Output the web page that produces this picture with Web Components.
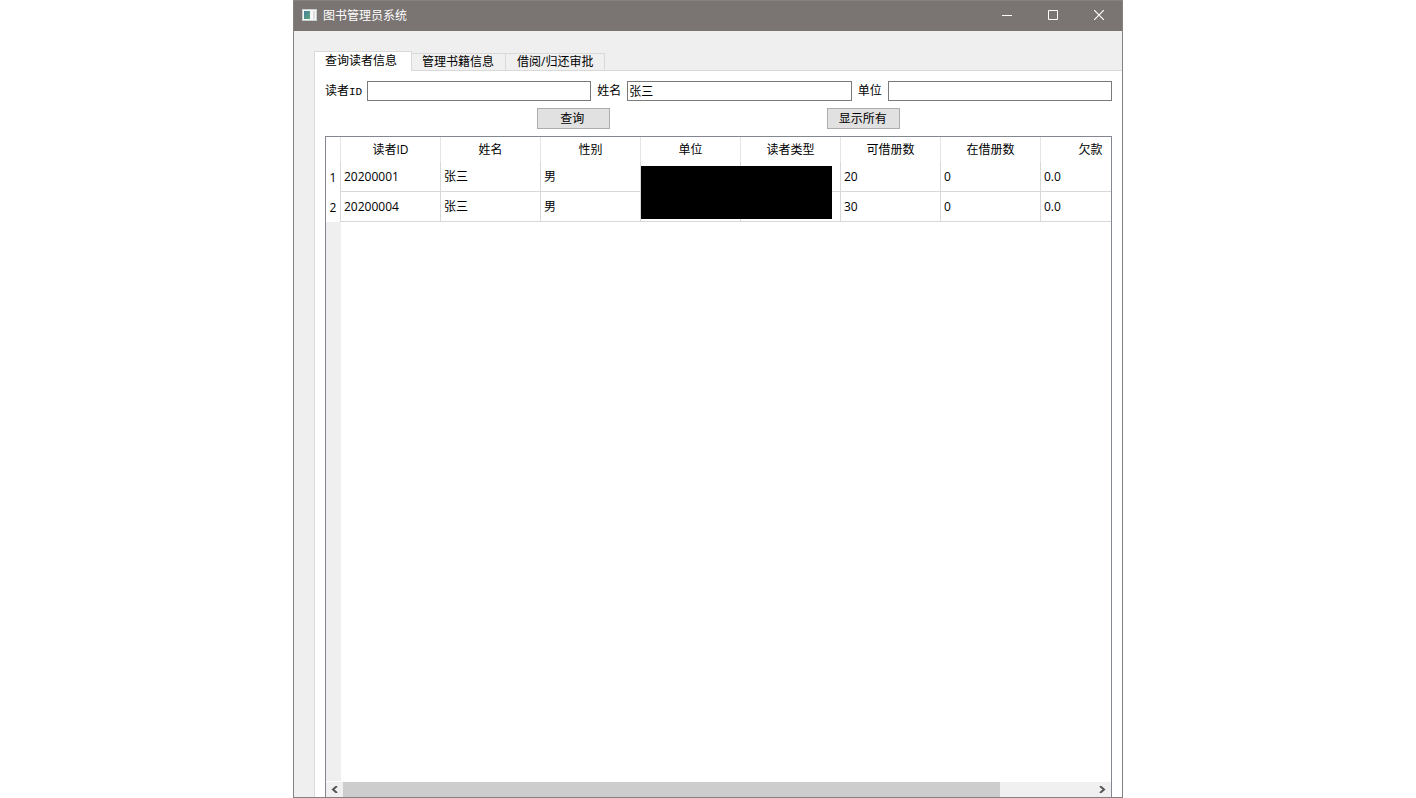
<!DOCTYPE html>
<html lang="zh-CN">
<head>
<meta charset="utf-8">
<title>图书管理员系统</title>
<style>
  html, body { height: 100%; margin: 0; background: #fff; }
  body {
    display: flex; justify-content: center;
    font: 12px/16px "Open Sans", "Noto Sans CJK SC", sans-serif; color: #000;
  }
</style>
</head>
<body>
<app-window heading="图书管理员系统">
  <tab-panel tabs="查询读者信息,管理书籍信息,借阅/归还审批">
    <search-form></search-form>
    <reader-table></reader-table>
  </tab-panel>
</app-window>

<template id="t-window">
  <style>
    :host { display: flex; flex-direction: column; box-sizing: border-box; width: 100%; max-width: 830px; height: 100%; border: 1px solid #858181; background: #efefef; }
    header { box-sizing: border-box; display: flex; align-items: center; flex: none; height: 30px; padding: 0 0 2px 8px; background: #7a7472; color: #fff; }
    .icon { flex: none; margin-right: 6px; }
    h1 { flex: 1; margin: 0; padding-top: 2px; font: inherit; }
    button { display: grid; place-items: center; width: 46px; height: 28px; padding: 0; border: 0; background: none; }
    main { flex: 1; display: flex; flex-direction: column; min-height: 0; padding: 20px 0 0 20px; }
  </style>
  <header>
    <svg class="icon" width="15" height="12" viewBox="0 0 15 12" aria-hidden="true">
      <defs><linearGradient id="g" x1="0" y1="0" x2="1" y2="1"><stop offset="0" stop-color="#4b7f9c"/><stop offset="1" stop-color="#58a67c"/></linearGradient></defs>
      <rect width="15" height="12" fill="#c9d0d0"/><rect x="1" y="1" width="13" height="10" fill="#f6f6f6"/>
      <rect x="2" y="2" width="6" height="8" fill="url(#g)"/><rect x="11" y="2" width="2" height="8" fill="#dcdcdc"/>
    </svg>
    <h1></h1>
    <button aria-label="最小化"><svg width="10" height="10"><path d="M0 5.5h10" stroke="#fff"/></svg></button>
    <button aria-label="最大化"><svg width="10" height="10"><path d="M.5.5h9v9h-9z" fill="none" stroke="#fff"/></svg></button>
    <button aria-label="关闭"><svg width="10" height="10"><path d="M0 0l10 10M10 0L0 10" stroke="#fff" stroke-width="1.2"/></svg></button>
  </header>
  <main><slot></slot></main>
</template>

<template id="t-tabs">
  <style>
    :host { flex: 1; display: flex; flex-direction: column; min-height: 0; }
    .bar { display: flex; align-items: flex-end; flex: none; height: 20px; margin-bottom: -1px; z-index: 1; }
    button { box-sizing: border-box; height: 18px; padding: 0 11px 0 10px; border: 1px solid #d9d9d9; border-left: 0; background: #f0f0f0; font: inherit; line-height: 16px; color: inherit; white-space: nowrap; }
    button:last-child { padding: 0 11px; }
    button[aria-selected=true] { height: 20px; padding: 0 13px 2px 10px; border-left: 1px solid #d9d9d9; border-bottom: 0; background: #fff; }
    button:first-child { min-width: 98px; text-align: left; }
    section { flex: 1; display: flex; flex-direction: column; gap: 7px; min-height: 0; padding: 10px 10px 0; border: solid #d9d9d9; border-width: 1px 0 0 1px; background: #fff; }
  </style>
  <div class="bar" role="tablist"></div>
  <section role="tabpanel"><slot></slot></section>
</template>

<template id="t-form">
  <style>
    :host { display: block; flex: none; }
    form { display: flex; flex-direction: column; gap: 7px; }
    .fields { display: flex; align-items: center; gap: 6px; }
    label { flex: none; }
    label:first-child { width: 36px; white-space: nowrap; }
    .id { font: 11px "Liberation Mono", monospace; }
    input { flex: 1; min-width: 0; box-sizing: border-box; height: 20px; padding: 0 1px; border: 1px solid #7a7a7a; background: #fff; font: inherit; color: inherit; }
    .actions { display: grid; grid-template-columns: 1fr 73px 1fr 73px 1fr; gap: 6px; }
    button { height: 21px; padding: 0 2px 0 0; border: 1px solid #adadad; background: #e1e1e1; font: inherit; color: inherit; }
    .query { grid-column: 2; } .all { grid-column: 4; }
  </style>
  <form>
    <div class="fields">
      <label for="rid">读者<span class="id">ID</span></label><input id="rid">
      <label for="name">姓名</label><input id="name" value="张三">
      <label for="unit">单位</label><input id="unit">
    </div>
    <div class="actions">
      <button type="button" class="query">查询</button>
      <button type="button" class="all">显示所有</button>
    </div>
  </form>
</template>

<template id="t-table">
  <style>
    :host { flex: 1; display: flex; flex-direction: column; min-height: 0; border: 1px solid #828790; border-bottom: 0; }
    .view { flex: 1; overflow: hidden; margin-bottom: 1px; background: linear-gradient(to right, #efefef 15px, #fff 15px); }
    table { table-layout: fixed; width: 815px; border-collapse: separate; border-spacing: 0; background: #fff; }
    col.num { width: 15px; } col { width: 100px; }
    th, td { box-sizing: border-box; padding: 0 3px; font-weight: normal; white-space: nowrap; border-right: 1px solid #d8d8d8; }
    thead th { height: 25px; border-right-color: #e5e5e5; text-align: center; }
    tbody td { height: 30px; border-bottom: 1px solid #d8d8d8; text-align: left; }
    tbody th { padding: 2px 0 0; text-align: center; }
    .hidden-info { position: relative; }
    .mask { position: absolute; z-index: 1; left: 0; top: 4px; width: 191px; height: 53px; background: #000; }
    .scroll { flex: none; display: grid; grid-template-columns: 17px 657fr 94fr 17px; height: 15px; background: #f0f0f0; }
    .scroll button { display: grid; place-items: center; padding: 0; border: 0; background: none; }
    .thumb { background: #cdcdcd; }
    .next { grid-column: 4; }
  </style>
  <div class="view">
    <table>
      <colgroup><col class="num"><col span="8"></colgroup>
      <thead></thead><tbody></tbody>
    </table>
  </div>
  <div class="scroll">
    <button aria-label="向左滚动"><svg width="7" height="7"><path d="M6 0L2 3.500l4 3.500" fill="none" stroke="#555" stroke-width="2"/></svg></button>
    <div class="thumb"></div>
    <button class="next" aria-label="向右滚动"><svg width="7" height="7"><path d="M1 0L5 3.500 1 7" fill="none" stroke="#555" stroke-width="2"/></svg></button>
  </div>
</template>

<script>
  class Base extends HTMLElement {
    constructor() {
      super();
      this.attachShadow({ mode: 'open' })
        .append(document.getElementById(this.constructor.template).content.cloneNode(true));
    }
    $(selector) { return this.shadowRoot.querySelector(selector); }
  }

  customElements.define('app-window', class extends Base {
    static template = 't-window';
    connectedCallback() { this.$('h1').textContent = this.getAttribute('heading'); }
  });

  customElements.define('tab-panel', class extends Base {
    static template = 't-tabs';
    connectedCallback() {
      const bar = this.$('.bar');
      bar.replaceChildren(...this.getAttribute('tabs').split(',').map((text, i) => {
        const tab = document.createElement('button');
        tab.setAttribute('role', 'tab');
        tab.setAttribute('aria-selected', i === 0);
        tab.textContent = text;
        return tab;
      }));
      bar.addEventListener('click', e => {
        if (!e.target.matches('button')) return;
        for (const tab of bar.children) tab.setAttribute('aria-selected', tab === e.target);
      });
    }
  });

  customElements.define('search-form', class extends Base {
    static template = 't-form';
  });

  customElements.define('reader-table', class extends Base {
    static template = 't-table';
    connectedCallback() {
      const columns = ['读者ID', '姓名', '性别', '单位', '读者类型', '可借册数', '在借册数', '欠款'];
      const rows = [
        ['20200001', '张三', '男', '', '', '20', '0', '0.0'],
        ['20200004', '张三', '男', '', '', '30', '0', '0.0']
      ];
      this.$('thead').innerHTML = `<tr><th></th>${columns.map(c => `<th scope="col">${c}</th>`).join('')}</tr>`;
      this.$('tbody').innerHTML = rows.map((row, i) =>
        `<tr><th scope="row">${i + 1}</th>${row.map(c => `<td>${c}</td>`).join('')}</tr>`).join('');
      // The private columns of both rows are covered by one mask.
      const cell = this.$('tbody tr').cells[4];
      cell.className = 'hidden-info';
      cell.innerHTML = '<div class="mask"></div>';
    }
  });
</script>
</body>
</html>
